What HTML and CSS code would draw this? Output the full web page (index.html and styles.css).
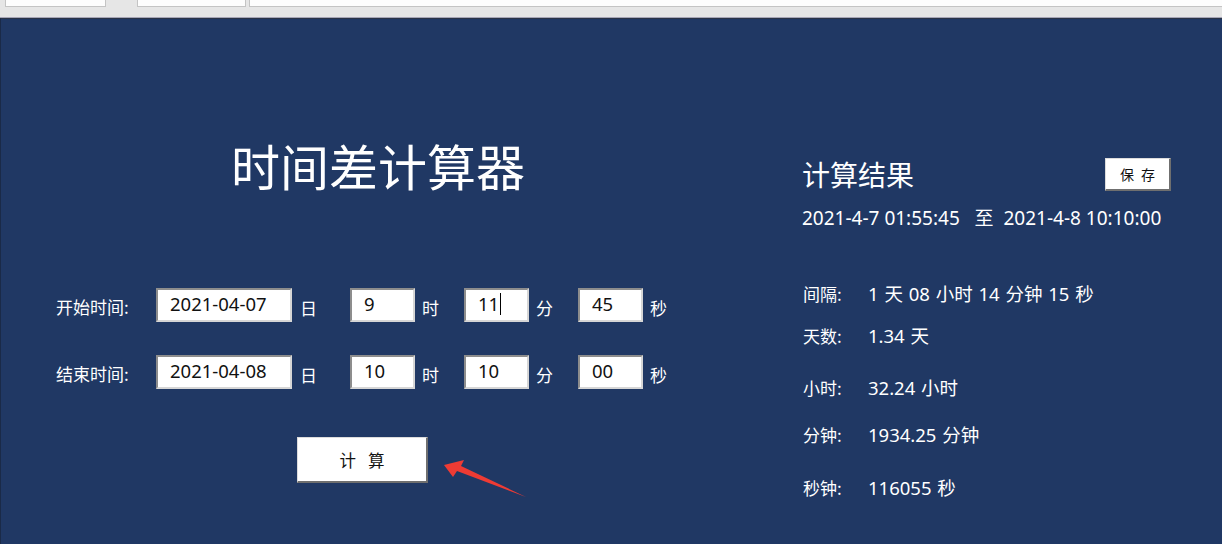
FILE: index.html
```html
<!DOCTYPE html>
<html lang="zh-CN">
<head>
<meta charset="utf-8">
<title>时间差计算器</title>
<link rel="stylesheet" href="styles.css">
</head>
<body>
<div class="topbar">
  <div class="tab tab1"></div>
  <div class="tab tab2"></div>
  <div class="tab tab3"></div>
</div>
<div class="panel">
  <div class="left">
    <h1 class="title">时间差计算器</h1>
    <div class="form">
      <div class="row">
        <span class="label">开始时间:</span>
        <div class="box box-date">2021-04-07</div><span class="unit unit-date">日</span>
        <div class="box">9</div><span class="unit">时</span>
        <div class="box">11<span class="caret"></span></div><span class="unit">分</span>
        <div class="box">45</div><span class="unit">秒</span>
      </div>
      <div class="row">
        <span class="label">结束时间:</span>
        <div class="box box-date">2021-04-08</div><span class="unit unit-date">日</span>
        <div class="box">10</div><span class="unit">时</span>
        <div class="box">10</div><span class="unit">分</span>
        <div class="box">00</div><span class="unit">秒</span>
      </div>
    </div>
    <button class="btn btn-calc">计算</button>
  </div>
  <div class="right">
    <div class="res-head">
      <h2 class="res-title">计算结果</h2>
      <button class="btn btn-save">保存</button>
    </div>
    <div class="range">2021-4-7 01:55:45&nbsp;&nbsp;&nbsp;至&nbsp;&nbsp;2021-4-8 10:10:00</div>
    <div class="res-row r1"><span class="rl">间隔:</span><span class="rv">1 天 08 小时 14 分钟 15 秒</span></div>
    <div class="res-row r2"><span class="rl">天数:</span><span class="rv">1.34 天</span></div>
    <div class="res-row r3"><span class="rl">小时:</span><span class="rv">32.24 小时</span></div>
    <div class="res-row r4"><span class="rl">分钟:</span><span class="rv">1934.25 分钟</span></div>
    <div class="res-row r5"><span class="rl">秒钟:</span><span class="rv">116055 秒</span></div>
  </div>
  <svg class="arrow" width="90" height="45" viewBox="440 458 90 45">
    <polygon points="444,465 464,460 461,466 526,497 457,471 453,477" fill="#ee3b34"/>
  </svg>
</div>
</body>
</html>
```

FILE: styles.css
```css
html, body {
  margin: 0;
  padding: 0;
  width: 1222px;
  height: 545px;
  overflow: hidden;
  font-family: "Noto Sans", "Noto Sans CJK SC", sans-serif;
}

.topbar {
  height: 17px;
  background: #e6e6e6;
  border-bottom: 1px solid #a7a7b8;
  display: flex;
  align-items: flex-start;
}

.tab {
  height: 6px;
  background: #fdfdfd;
  border: 1px solid #c4c4c4;
  border-top: none;
}

.tab1 { margin-left: 5px; width: 99px; }
.tab2 { margin-left: 31px; width: 107px; }
.tab3 { margin-left: 3px; flex: 1; border-right: none; }

.panel {
  position: relative;
  height: 526px;
  background: #203864;
  border-top: 1px solid #2b3447;
  border-left: 1px solid #1a2a48;
  box-sizing: border-box;
  display: flex;
  color: #fff;
}

.left {
  width: 690px;
  padding-left: 55px;
  padding-top: 119px;
}

.title {
  margin: 0 0 0 175px;
  font-size: 49px;
  line-height: 54px;
  font-weight: normal;
  font-family: "Noto Sans CJK SC", sans-serif;
  white-space: nowrap;
}

.form {
  margin-top: 96px;
  display: flex;
  flex-direction: column;
  gap: 33px;
}

.row {
  display: flex;
  align-items: center;
  height: 34px;
}

.label {
  width: 100px;
  font-size: 17px;
  font-family: "Noto Sans CJK SC", sans-serif;
  padding-top: 3px;
}

.box {
  box-sizing: border-box;
  width: 65px;
  height: 34px;
  background: #fff;
  color: #111;
  border: 2px solid;
  border-color: #8d8d8d #d6d6d6 #d6d6d6 #8d8d8d;
  padding-left: 12px;
  padding-bottom: 3px;
  font-size: 18.5px;
  line-height: 26px;
  display: flex;
  align-items: center;
}

.box-date {
  width: 136px;
}

.caret {
  display: inline-block;
  width: 1px;
  height: 22px;
  background: #000;
  margin-left: 1px;
}

.unit {
  box-sizing: border-box;
  width: 49px;
  padding-left: 7px;
  font-size: 17px;
  font-family: "Noto Sans CJK SC", sans-serif;
  padding-top: 4px;
}

.unit-date {
  width: 58px;
  padding-left: 8px;
}

.btn {
  background: #fff;
  color: #111;
  border: 1px solid #dcdcdc;
  border-right: 2px solid #6f6f6f;
  border-bottom: 2px solid #6f6f6f;
  font-family: "Noto Sans CJK SC", sans-serif;
  padding: 0;
  cursor: pointer;
}

.btn-calc {
  display: block;
  margin: 48px 0 0 241px;
  width: 131px;
  height: 46px;
  font-size: 16.5px;
  letter-spacing: 12px;
  text-indent: 12px;
}

.right {
  padding-top: 137px;
  padding-left: 56px;
  width: 370px;
}

.res-head {
  display: flex;
  justify-content: space-between;
  align-items: center;
  height: 36px;
}

.res-title {
  margin: 0;
  font-size: 28px;
  line-height: 36px;
  font-weight: normal;
  font-family: "Noto Sans CJK SC", sans-serif;
}

.btn-save {
  width: 66px;
  height: 33px;
  font-size: 14px;
  letter-spacing: 7px;
  text-indent: 7px;
  margin-right: 1px;
}

.range {
  margin-top: 14px;
  font-size: 19px;
  line-height: 24px;
  white-space: nowrap;
}

.res-row {
  display: flex;
  align-items: center;
  height: 24px;
  font-size: 18.5px;
  white-space: nowrap;
  word-spacing: 1px;
}

.rl {
  width: 65px;
  padding-left: 1px;
  font-size: 17px;
  font-family: "Noto Sans CJK SC", sans-serif;
}

.r1 { margin-top: 51px; }
.r2 { margin-top: 18px; }
.r3 { margin-top: 28px; }
.r4 { margin-top: 23px; }
.r5 { margin-top: 29px; }

.arrow {
  position: absolute;
  left: 439px;
  top: 439px;
}
```
